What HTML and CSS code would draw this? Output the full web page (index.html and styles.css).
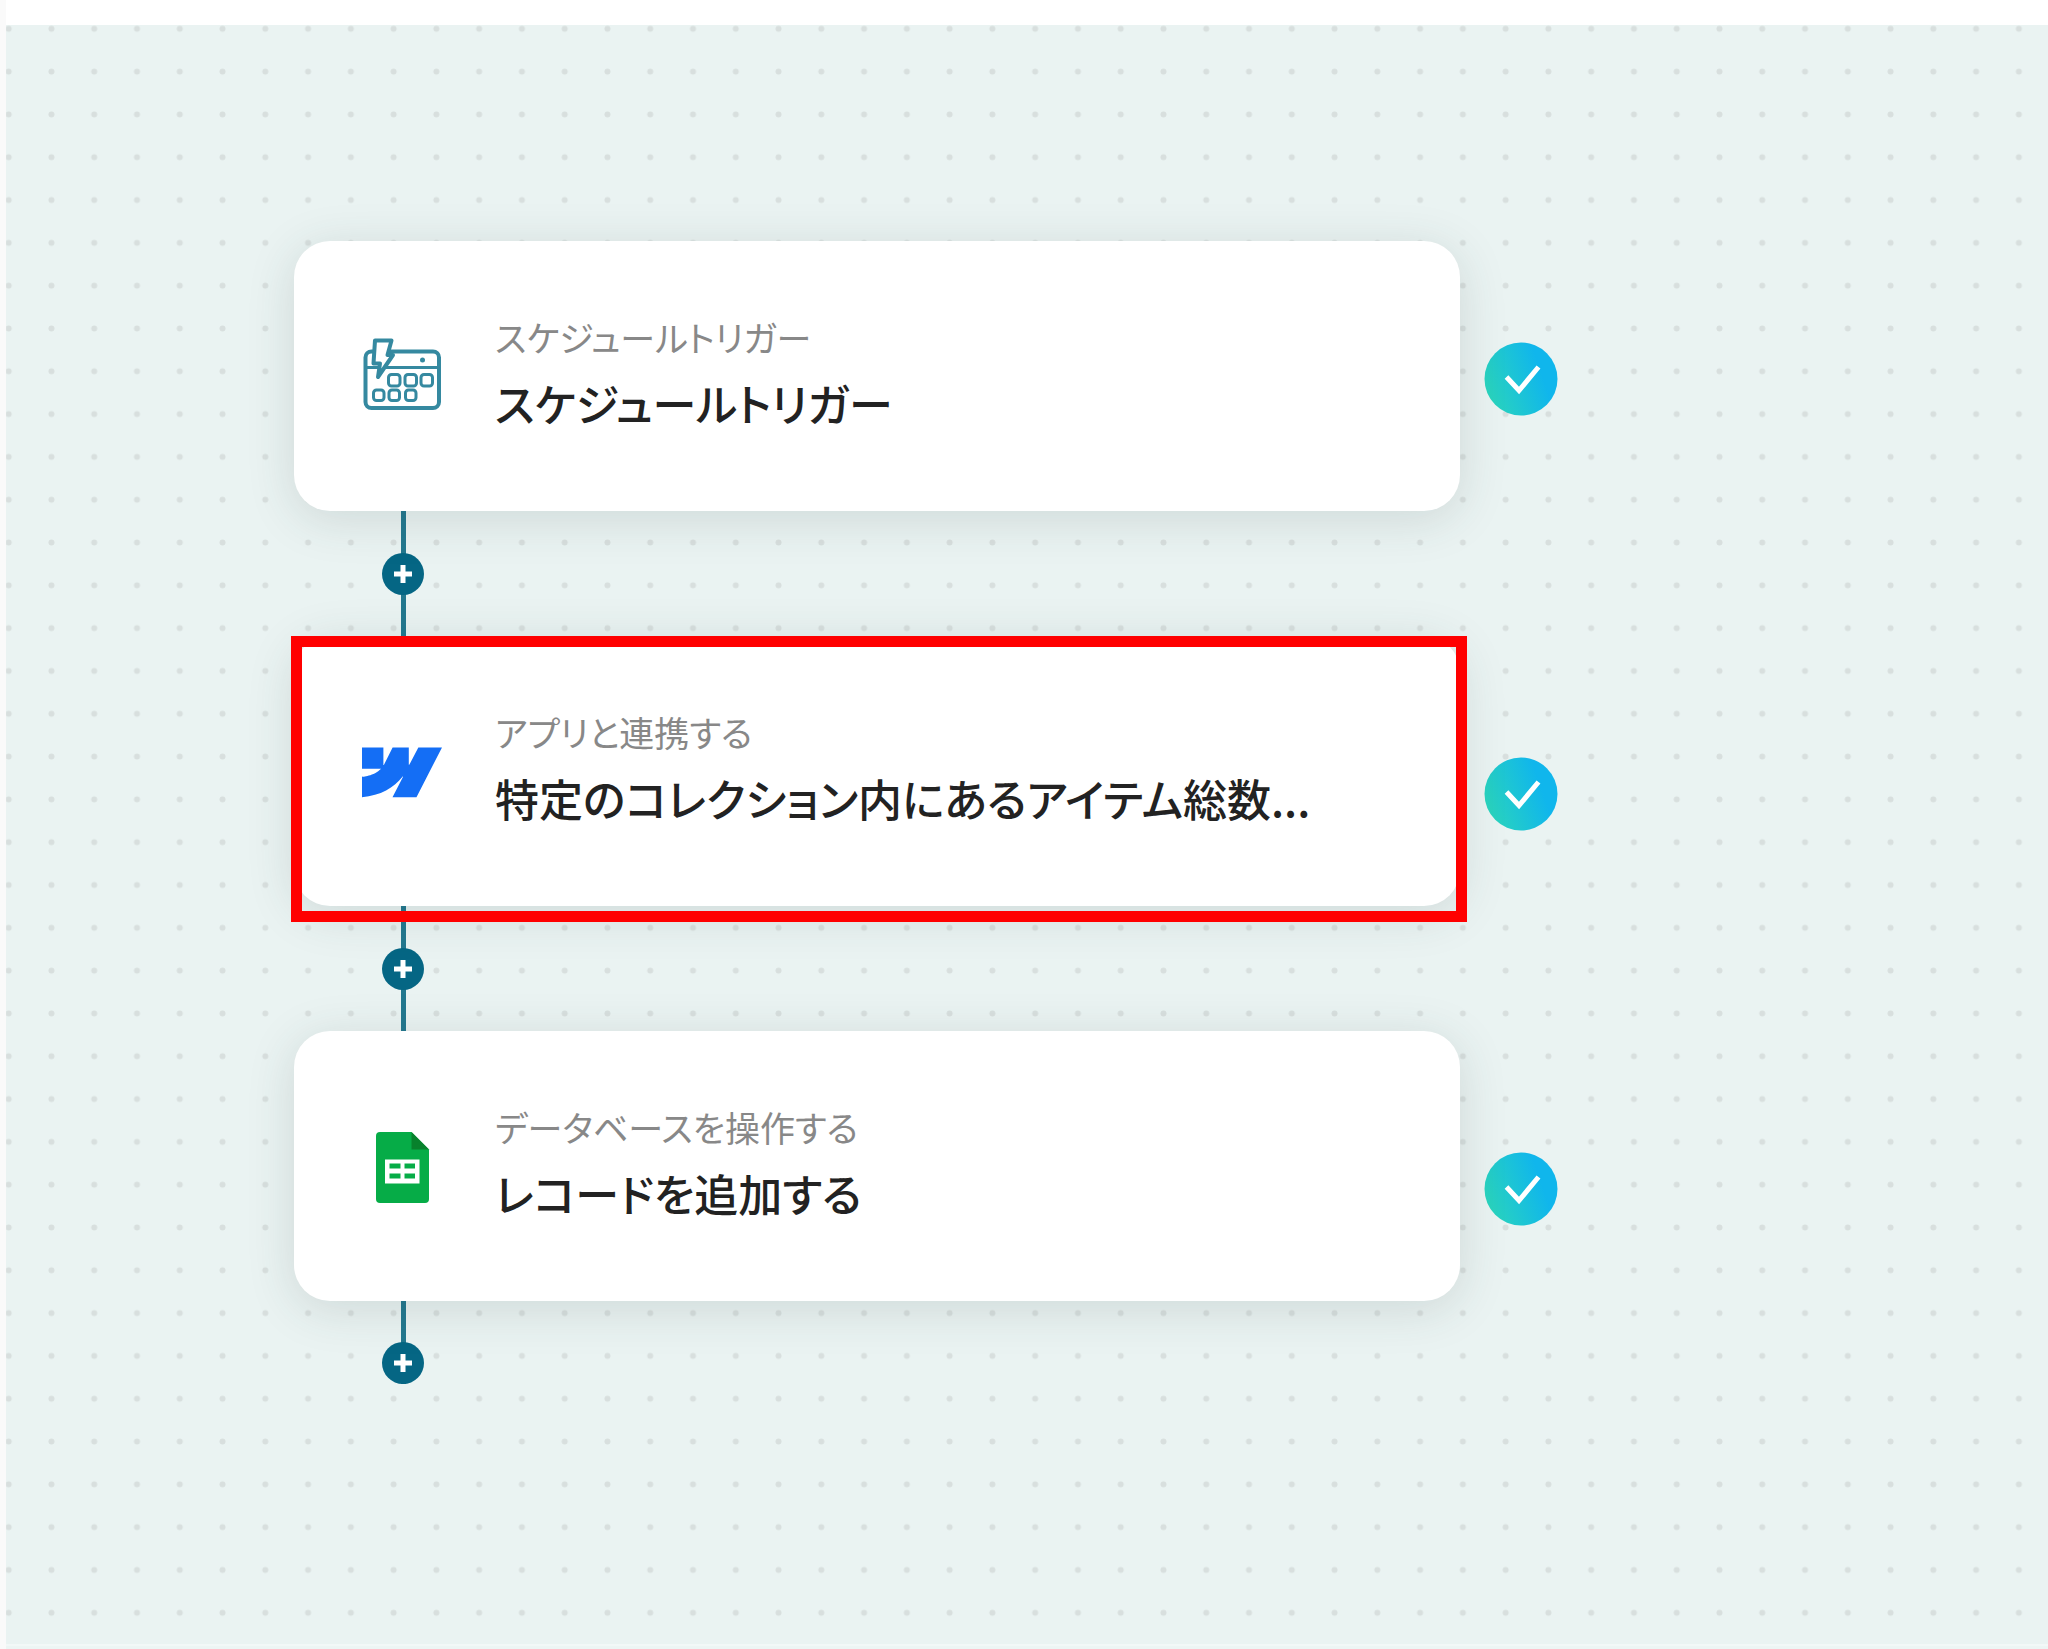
FILE: index.html
```html
<!DOCTYPE html>
<html lang="ja">
<head>
<meta charset="utf-8">
<meta name="viewport" content="width=device-width, initial-scale=1">
<title>フローボット</title>
<link rel="stylesheet" href="styles.css">
</head>
<body>
<div class="rail"></div>
<div class="workspace">
  <header class="topbar"></header>
  <main class="canvas">
    <svg class="dots" aria-hidden="true">
      <defs>
        <pattern id="grid" x="-18.700" y="-17.600" width="42.770" height="42.810" patternUnits="userSpaceOnUse">
          <circle cx="21.385" cy="21.385" r="3"/>
        </pattern>
      </defs>
      <rect width="100%" height="100%" fill="url(#grid)"/>
    </svg>
    <svg class="defs" aria-hidden="true">
      <linearGradient id="done" x1="0" y1="0.75" x2="1" y2="0.4">
        <stop offset="0.05" stop-color="#2ad4bd"/>
        <stop offset="0.8" stop-color="#10b6ec"/>
      </linearGradient>
      <symbol id="check" viewBox="0 0 74 74">
        <circle cx="37" cy="37" r="36.500" fill="url(#done)"/>
        <path d="M22.500 35L35 48.500L54.500 25" fill="none" stroke="#fff" stroke-width="5"/>
      </symbol>
      <symbol id="plus" viewBox="0 0 18 18">
        <path d="M9 0V18M0 9H18" stroke="#fff" stroke-width="5"/>
      </symbol>
    </svg>

    <div class="flow">
      <div class="row">
        <article class="card">
          <svg class="icon" viewBox="22 16 80 80" aria-hidden="true">
            <g fill="none" stroke="#3589a0" stroke-width="4">
              <rect x="25.500" y="31.500" width="73.500" height="56.500" rx="6"/>
              <path d="M27 47.500H99" stroke-width="3"/>
              <g stroke-width="3">
                <rect x="48.500" y="54.500" width="11.500" height="11.500" rx="3"/>
                <rect x="65" y="54.500" width="11.500" height="11.500" rx="3"/>
                <rect x="81" y="54.500" width="11.500" height="11.500" rx="3"/>
                <rect x="33.500" y="70" width="10.500" height="10.500" rx="3"/>
                <rect x="49" y="70" width="10.500" height="10.500" rx="3"/>
                <rect x="65.500" y="70" width="10.500" height="10.500" rx="3"/>
              </g>
              <path d="M35 20.500H51.500L47.500 35H53L38 57L40 43.500H33.500Z" fill="#fff" stroke-width="4" stroke-linejoin="round"/>
            </g>
            <circle cx="82.500" cy="40" r="2.500" fill="#3589a0"/>
          </svg>
          <div class="text">
            <p class="kind">スケジュールトリガー</p>
            <h2 class="title">スケジュールトリガー</h2>
          </div>
        </article>
        <svg class="badge badge-first" role="img" aria-label="設定完了"><use href="#check"/></svg>
      </div>

      <div class="link"><button class="add" type="button" aria-label="追加"><svg class="plus"><use href="#plus"/></svg></button></div>

      <div class="row">
        <article class="card selected">
          <svg class="icon" viewBox="0 -0.400 24 24" aria-hidden="true">
            <path fill="#146ef5" d="m24 4.515-7.658 14.970H9.149l3.205-6.204h-.144C9.566 16.713 5.621 18.973 0 19.485v-6.118s3.596-.213 5.710-2.435H0V4.515h6.417v5.278l.144-.001 2.622-5.277h4.854v5.244h.144l2.720-5.244H24Z"/>
          </svg>
          <div class="text">
            <p class="kind">アプリと連携する</p>
            <h2 class="title">特定のコレクション内にあるアイテム総数...</h2>
          </div>
        </article>
        <svg class="badge" role="img" aria-label="設定完了"><use href="#check"/></svg>
      </div>

      <div class="link"><button class="add" type="button" aria-label="追加"><svg class="plus"><use href="#plus"/></svg></button></div>

      <div class="row">
        <article class="card">
          <svg class="icon" viewBox="22 25 80 80" aria-hidden="true">
            <path fill="#06ac47" d="M40 31H71.500L89 48.500V98a4 4 0 0 1-4 4H40a4 4 0 0 1-4-4V35a4 4 0 0 1 4-4Z"/>
            <path fill="#08812c" d="M71.500 31L89 48.500H71.500Z"/>
            <path fill="#fff" fill-rule="evenodd" d="M45 58.500H79.500V82.500H45ZM49.500 62.500V67.500H60.500V62.500ZM64.500 62.500V67.500H75V62.500ZM49.500 72.500V77.500H60.500V72.500ZM64.500 72.500V77.500H75V72.500Z"/>
          </svg>
          <div class="text">
            <p class="kind">データベースを操作する</p>
            <h2 class="title">レコードを追加する</h2>
          </div>
        </article>
        <svg class="badge" role="img" aria-label="設定完了"><use href="#check"/></svg>
      </div>

      <div class="link link-end"><button class="add" type="button" aria-label="追加"><svg class="plus"><use href="#plus"/></svg></button></div>
    </div>
  </main>
  <footer class="bottom"></footer>
</div>
</body>
</html>
```
FILE: styles.css
```css
* {
  box-sizing: border-box;
}

body {
  display: flex;
  min-height: 100vh;
  margin: 0;
  background: #fff;
  font-family: "Noto Sans CJK JP", sans-serif;
  font-feature-settings: "palt";
}

.rail {
  flex: 0 0 6px;
  background: #fafafa;
}

.workspace {
  display: flex;
  flex: 1;
  flex-direction: column;
  min-width: 0;
}

.topbar {
  height: 25px;
  background: #fff;
}

.canvas {
  position: relative;
  flex: 1;
  padding: 216px 24px 80px 288px;
  background: #eaf3f2;
}

.bottom {
  height: 5px;
  border-top: 2px solid #f2f8f7;
  background: #edf5f4;
}

.dots {
  position: absolute;
  inset: 0;
  width: 100%;
  height: 100%;
  fill: #d8dfde;
}

.defs {
  position: absolute;
  width: 0;
  height: 0;
}

.flow {
  position: relative;
  max-width: 1264px;
}

.row {
  display: flex;
  gap: 24px;
  align-items: flex-start;
}

.card {
  position: relative;
  display: flex;
  flex: 1;
  gap: 53px;
  align-items: center;
  min-width: 0;
  height: 270px;
  padding: 0 68px;
  border-radius: 36px;
  background: #fff;
  box-shadow: 0 8px 48px rgba(50, 65, 65, 0.15);
}

.selected::after {
  content: "";
  position: absolute;
  inset: 0 -7px -16px -3px;
  border: 11px solid #f00;
}

.icon {
  flex: none;
  width: 80px;
  height: 80px;
}

.text {
  min-width: 0;
  padding-bottom: 10px;
}

.kind,
.title {
  margin: 0;
  white-space: nowrap;
}

.kind {
  color: #888;
  font-size: 35px;
  line-height: 64px;
}

.title {
  color: #222;
  font-size: 44px;
  font-weight: 500;
  line-height: 68px;
}

.badge {
  flex: none;
  width: 74px;
  height: 74px;
  margin-top: 121px;
}

.badge-first {
  margin-top: 101px;
}

.link {
  display: flex;
  align-items: center;
  justify-content: center;
  width: 42px;
  height: 125px;
  margin-left: 88px;
  background: linear-gradient(#23788f, #23788f) center / 5px 100% no-repeat;
}

.link-end {
  align-items: flex-end;
  height: 83px;
}

.add {
  display: grid;
  place-items: center;
  width: 42px;
  height: 42px;
  padding: 0;
  border: 0;
  border-radius: 50%;
  background: #056684;
}

.plus {
  width: 18px;
  height: 18px;
}
```
